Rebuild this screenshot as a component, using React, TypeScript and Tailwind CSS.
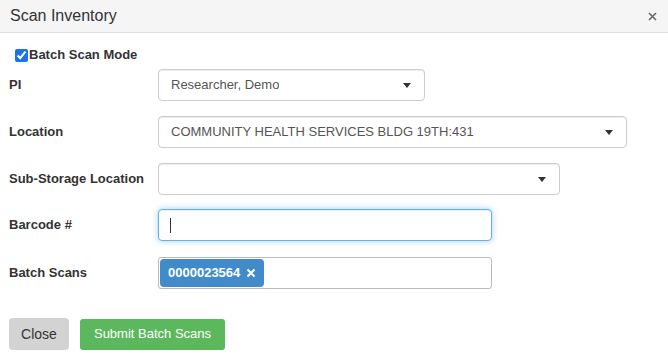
import React from "react";

const font = { fontFamily: '"Liberation Sans", Arial, sans-serif' };

function Caret() {
  return (
    <svg width="8" height="5" viewBox="0 0 8 5" className="shrink-0">
      <path d="M0 0 L8 0 L4 5 Z" fill="#333" />
    </svg>
  );
}

function Select({ value, width }: { value?: string; width: string }) {
  return (
    <div
      className={`${width} h-[32px] flex items-center justify-between border border-[#ccc] rounded-[4px] bg-white pl-[12px] pr-[13px] shadow-[inset_0_1px_1px_rgba(0,0,0,0.075)]`}
    >
      <span className="text-[13px] text-[#555] truncate">{value}</span>
      <Caret />
    </div>
  );
}

function Row({ label, children, className = "" }: { label: string; children: React.ReactNode; className?: string }) {
  return (
    <div className={`flex items-center ${className}`}>
      <label className="w-[149px] shrink-0 text-[13px] text-[#333] font-bold">{label}</label>
      {children}
    </div>
  );
}

export default function App() {
  return (
    <div style={font} className="w-[668px] h-[364px] bg-white text-[#333] overflow-hidden">
      <div className="h-[33px] bg-[#f5f5f5] border-b border-[#ddd] flex items-center justify-between pl-[10px] pr-[11px]">
        <h4 className="text-[16px] text-[#333]">Scan Inventory</h4>
        <svg width="9" height="9" viewBox="0 0 9 9">
          <path d="M1 1 L8 8 M8 1 L1 8" stroke="#666" strokeWidth="1.6" />
        </svg>
      </div>

      <div className="pl-[9px] pt-[15px]">
        <label className="flex items-center ml-[6px] h-[14px]">
          <input type="checkbox" defaultChecked className="w-[13px] h-[13px] m-0 accent-[#1a73e8]" />
          <span className="text-[13px] font-bold ml-[1px] text-[#333]">Batch Scan Mode</span>
        </label>

        <Row label="PI" className="mt-[7px]">
          <Select value="Researcher, Demo" width="w-[267px]" />
        </Row>

        <Row label="Location" className="mt-[15px]">
          <Select value="COMMUNITY HEALTH SERVICES BLDG 19TH:431" width="w-[469px]" />
        </Row>

        <Row label="Sub-Storage Location" className="mt-[15px]">
          <Select width="w-[402px]" />
        </Row>

        <Row label="Barcode #" className="mt-[14px]">
          <div className="w-[334px] h-[32px] flex items-center border border-[#66afe9] rounded-[4px] bg-white pl-[11px] shadow-[inset_0_1px_1px_rgba(0,0,0,0.075),0_0_6px_rgba(102,175,233,0.6)]">
            <span className="w-[1px] h-[15px] bg-[#333]" />
          </div>
        </Row>

        <Row label="Batch Scans" className="mt-[16px]">
          <div className="w-[334px] h-[32px] flex items-center border border-[#bbb] rounded-[3px] bg-white pl-[1px]">
            <span className="h-[28px] flex items-center gap-[6px] bg-[#428bca] rounded-[4px] px-[8px] text-white text-[13px] font-bold">
              0000023564
              <svg width="10" height="10" viewBox="0 0 10 10">
                <path d="M1.5 1.5 L8.5 8.5 M8.5 1.5 L1.5 8.5" stroke="#fff" strokeWidth="2" />
              </svg>
            </span>
          </div>
        </Row>

        <div className="flex items-center gap-[11px] mt-[29px]">
          <button className="w-[60px] h-[32px] bg-[#d3d3d3] rounded-[4px] text-[14px] text-[#333]">Close</button>
          <button className="w-[145px] h-[31px] bg-[#5cb85c] rounded-[3px] text-[13px] text-white">Submit Batch Scans</button>
        </div>
      </div>
    </div>
  );
}
